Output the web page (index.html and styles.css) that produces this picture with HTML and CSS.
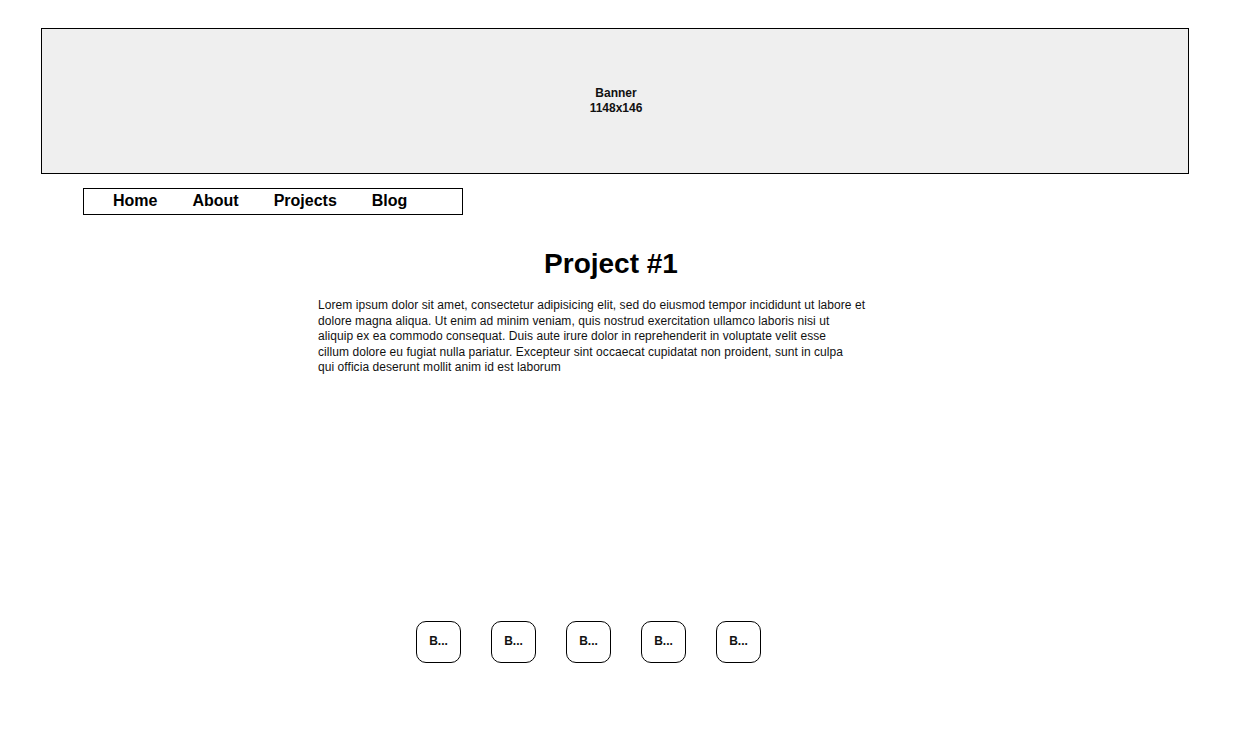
FILE: index.html
```html
<!DOCTYPE html>
<html>
<head>
<meta charset="utf-8">
<link rel="stylesheet" href="styles.css">
</head>
<body>
<div class="page">
  <div class="banner">
    <span>Banner</span>
    <span>1148x146</span>
  </div>
  <nav class="nav">
    <a>Home</a>
    <a>About</a>
    <a>Projects</a>
    <a>Blog</a>
  </nav>
  <h1 class="title">Project #1</h1>
  <p class="text">Lorem ipsum dolor sit amet, consectetur adipisicing elit, sed do eiusmod tempor incididunt ut labore et<br>dolore magna aliqua. Ut enim ad minim veniam, quis nostrud exercitation ullamco laboris nisi ut<br>aliquip ex ea commodo consequat. Duis aute irure dolor in reprehenderit in voluptate velit esse<br>cillum dolore eu fugiat nulla pariatur. Excepteur sint occaecat cupidatat non proident, sunt in culpa<br>qui officia deserunt mollit anim id est laborum</p>
  <div class="buttons">
    <div class="btn">B...</div>
    <div class="btn">B...</div>
    <div class="btn">B...</div>
    <div class="btn">B...</div>
    <div class="btn">B...</div>
  </div>
</div>
</body>
</html>
```

FILE: styles.css
```css
html, body {
  margin: 0;
  padding: 0;
  background: #fff;
}
body {
  font-family: "Liberation Sans", Arial, sans-serif;
  color: #000;
}
.page {
  display: flex;
  flex-direction: column;
  padding-top: 28px;
}
.banner {
  box-sizing: border-box;
  width: 1148px;
  height: 146px;
  margin-left: 41px;
  border: 1px solid #000;
  background: #efefef;
  display: flex;
  flex-direction: column;
  align-items: center;
  justify-content: center;
  font-size: 12px;
  font-weight: bold;
  line-height: 15px;
  color: #111;
  padding-left: 2px;
}
.nav {
  box-sizing: border-box;
  width: 380px;
  height: 27px;
  margin-left: 83px;
  margin-top: 14px;
  border: 1px solid #000;
  display: flex;
  align-items: center;
  gap: 35px;
  padding-left: 29px;
  font-size: 16px;
  font-weight: bold;
  line-height: 18px;
  padding-bottom: 1px;
}
.title {
  margin: 29px 0 0 0;
  font-size: 28px;
  font-weight: bold;
  line-height: 40px;
  text-align: center;
  width: 1222px;
}
.text {
  margin: 14px 0 0 318px;
  width: 580px;
  font-size: 12px;
  line-height: 15.5px;
  letter-spacing: 0.06px;
  color: #111;
}
.buttons {
  display: flex;
  gap: 30px;
  margin-left: 416px;
  margin-top: 245px;
}
.btn {
  box-sizing: border-box;
  width: 45px;
  height: 42px;
  border: 1px solid #000;
  border-radius: 10px;
  display: flex;
  align-items: center;
  justify-content: center;
  font-size: 12px;
  font-weight: bold;
  color: #111;
  padding-bottom: 1px;
}
```
